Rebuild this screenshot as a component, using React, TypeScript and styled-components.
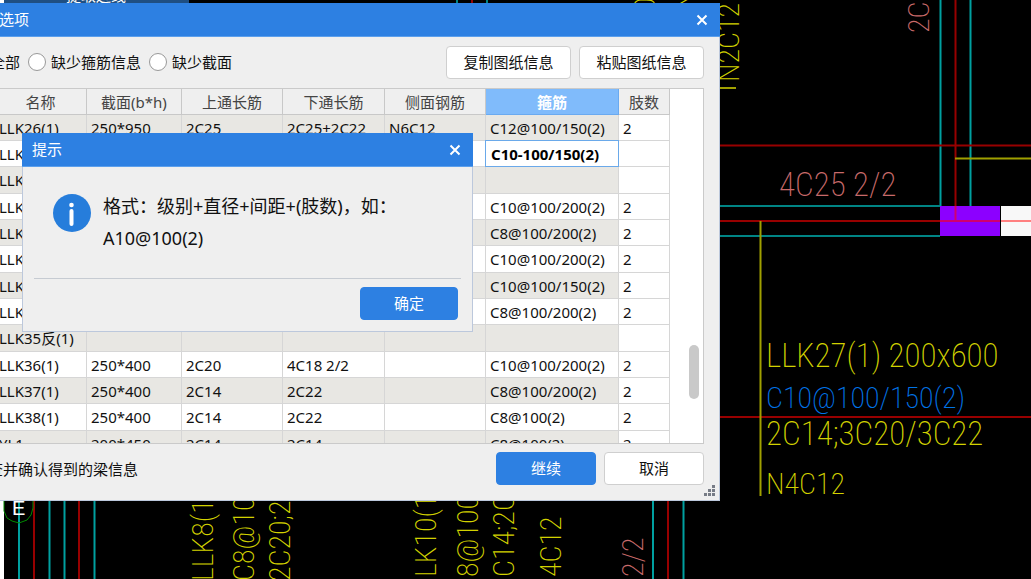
import React, { useState } from "react";
import styled, { createGlobalStyle } from "styled-components";

const GlobalStyle = createGlobalStyle`
  * { box-sizing: border-box; }
  body {
    margin: 0;
    background: #000;
    font-family: "Noto Sans", "Noto Sans CJK SC", sans-serif;
    font-size: 15px;
    line-height: 20px;
    color: #111;
  }
  button, input { font: inherit; color: inherit; }
`;

const Desktop = styled.main`
  position: relative;
  min-height: 100vh;
  overflow: hidden;
`;

/* CAD canvas */
const Canvas = styled.svg`
  position: absolute;
  inset: 0;
  width: 100%;
  height: 100%;
`;

const colors = {
  cyan: "#00a0a0",
  teal: "#008484",
  red: "#980000",
  olive: "#a0a000",
  yellow: "#d2d200",
  rose: "#c86a6a",
  blue: "#0074e8",
};

const CadLine = styled.line<{ $c: keyof typeof colors }>`
  stroke: ${(p) => colors[p.$c]};
  stroke-width: 2px;
`;

const CadText = styled.text<{ $c: keyof typeof colors; $large?: boolean }>`
  fill: ${(p) => colors[p.$c]};
  font-family: "Roboto Condensed", Roboto, sans-serif;
  font-weight: 200;
  font-size: ${(p) => (p.$large ? 33 : 30)}px;
`;

const Vertical = ({ x, y, c, children }: { x: number; y: number; c: keyof typeof colors; children: string }) => (
  <CadText $c={c} transform={`translate(${x} ${y}) rotate(-90)`}>{children}</CadText>
);

/* Windows */
const Frame = styled.section<{ $x: number; $y: number; $w: number }>`
  position: absolute;
  left: ${(p) => p.$x}px;
  top: ${(p) => p.$y}px;
  width: ${(p) => p.$w}px;
  background: #efefef;
  border: 1px solid #bcc8dc;
  border-top: 0;
`;

const TitleBar = styled.header<{ $pad: number }>`
  display: flex;
  align-items: center;
  justify-content: space-between;
  height: 34px;
  margin: 0 -1px;
  padding: 0 10px 0 ${(p) => p.$pad}px;
  background: #2d80e2;
  border-bottom: 1px solid #5b9fec;
  color: #fff;
`;

const Title = styled.h1`
  margin: 0;
  padding-bottom: 2px;
  font-size: 15px;
  font-weight: 400;
  line-height: 20px;
`;

const CloseButton = styled.button`
  display: flex;
  padding: 2px;
  border: 0;
  background: none;
  color: #fff;
`;

const Close = () => (
  <CloseButton aria-label="关闭">
    <svg width="12" height="12" viewBox="0 0 12 12">
      <path d="M1.5 1.5l9 9M10.5 1.5l-9 9" stroke="currentColor" strokeWidth="2" />
    </svg>
  </CloseButton>
);

const Toolbar = styled.div`
  display: flex;
  align-items: center;
  gap: 8px;
  padding: 9px 15px 9px 26px;
`;

const RadioLabel = styled.label`
  display: flex;
  align-items: center;
  gap: 5px;
  padding-bottom: 2px;
`;

const Radio = styled.input`
  appearance: none;
  width: 18px;
  height: 18px;
  margin: 0;
  border: 1px solid #999;
  border-radius: 50%;
  background: #fff;
`;

const Spacer = styled.div`
  flex: 1;
`;

const Button = styled.button<{ $primary?: boolean; $w: number }>`
  width: ${(p) => p.$w}px;
  height: 33px;
  padding: 0 0 2px;
  border: 1px solid ${(p) => (p.$primary ? "#2d80e2" : "#cfcfcf")};
  border-radius: 4px;
  background: ${(p) => (p.$primary ? "#2d80e2" : "#fff")};
  color: ${(p) => (p.$primary ? "#fff" : "#111")};
`;

const TableArea = styled.div`
  display: flex;
  height: 356px;
  margin: 0 15px;
  overflow: hidden;
  border: 1px solid #cacaca;
  background: #fff;
`;

const Grid = styled.table`
  flex: 1;
  align-self: flex-start;
  table-layout: fixed;
  border-collapse: separate;
  border-spacing: 0;
  width: 100%;
`;

const Head = styled.th<{ $active?: boolean }>`
  height: 26px;
  padding: 0;
  border-right: 1px solid ${(p) => (p.$active ? "#6aaaf0" : "#c8c8c8")};
  border-bottom: 1px solid ${(p) => (p.$active ? "#6aaaf0" : "#c8c8c8")};
  background: ${(p) => (p.$active ? "#80bbfb" : "#efefef")};
  color: ${(p) => (p.$active ? "#fff" : "#444")};
  font-weight: ${(p) => (p.$active ? 700 : 400)};
`;

const Row = styled.tr`
  height: 26px;
  &:nth-child(3n) { height: 27px; }
  &:nth-child(odd) td { background: #e8e7e3; }
  &:nth-child(odd) td:last-child { background: #fff; }
`;

const Cell = styled.td`
  padding: 0 0 0 4px;
  border-right: 1px solid #d6d6d6;
  border-bottom: 1px solid #d6d6d6;
  white-space: nowrap;
`;

const EditCell = styled(Cell)`
  padding: 0;
`;

const Editor = styled.input`
  display: block;
  width: 100%;
  height: 25px;
  padding: 0 0 0 5px;
  border: 0;
  outline: 1px solid #6aa9ea;
  background: #fff;
  color: #000;
  font-weight: 700;
`;

const Gutter = styled.div`
  display: flex;
  justify-content: flex-end;
  align-items: flex-start;
  width: 33px;
  padding: 256px 4px 0 0;
`;

const Thumb = styled.div`
  width: 10px;
  height: 54px;
  border-radius: 5px;
  background: #c9c9c9;
`;

const Footer = styled.footer`
  display: flex;
  align-items: center;
  gap: 8px;
  padding: 8px 15px 15px 17px;
`;

const Grip = styled.svg`
  position: absolute;
  right: 4px;
  bottom: 4px;
`;

const Message = styled.div`
  display: flex;
  gap: 12px;
  margin: 0 11px;
  padding: 23px 0 24px 19px;
  border-bottom: 1px solid #c6cbd2;
  font-size: 18px;
  line-height: 32px;
`;

const InfoIcon = styled.svg`
  flex: none;
  margin-top: 4px;
`;

const MessageText = styled.p`
  margin: 0;
`;

const Actions = styled.div`
  display: flex;
  justify-content: flex-end;
  padding: 8px 14px 11px;
`;

const headers = ["名称", "截面(b*h)", "上通长筋", "下通长筋", "侧面钢筋", "箍筋", "肢数"];
const widths = [92, 95, 101, 102, 101, 133, 51];

const rows: string[][] = [
  ["LLK26(1)", "250*950", "2C25", "2C25+2C22", "N6C12", "C12@100/150(2)", "2"],
  ["LLK27(1)", "", "", "", "", "C10-100/150(2)", ""],
  ["LLK28(1)", "", "", "", "", "", ""],
  ["LLK29(1)", "", "", "", "", "C10@100/200(2)", "2"],
  ["LLK30(1)", "", "", "", "", "C8@100/200(2)", "2"],
  ["LLK31(1)", "", "", "", "", "C10@100/200(2)", "2"],
  ["LLK32(1)", "", "", "", "", "C10@100/150(2)", "2"],
  ["LLK33(1)", "", "", "", "", "C8@100/200(2)", "2"],
  ["LLK35反(1)", "", "", "", "", "", ""],
  ["LLK36(1)", "250*400", "2C20", "4C18 2/2", "", "C10@100/200(2)", "2"],
  ["LLK37(1)", "250*400", "2C14", "2C22", "", "C8@100/200(2)", "2"],
  ["LLK38(1)", "250*400", "2C14", "2C22", "", "C8@100(2)", "2"],
  ["YL1", "200*450", "2C14", "2C14", "", "C8@100(2)", "2"],
];

const EDIT_ROW = 1;
const STIRRUP_COL = 5;

function Drawing() {
  return (
    <Canvas>
      {/* toolbar behind the windows */}
      <rect width="4" height="100%" fill="#fff" />
      <rect x="4" width="185" height="4" fill="#1f4f82" />
      <text x="66" y="1" fontSize="15" fill="#fff">提取边线</text>

      {[457, 487].map((x) => <CadLine key={x} $c="teal" x1={x} x2={x} y1="0" y2="10" />)}
      <CadLine $c="red" x1="472" x2="472" y1="0" y2="10" />
      <Vertical x={655} y={12} c="yellow">0C</Vertical>
      <Vertical x={692} y={12} c="yellow">N2</Vertical>

      {/* right-hand beams */}
      <rect x="940" y="206" width="60" height="30" fill="#8c00ff" />
      <rect x="1001" y="206" width="100%" height="30" fill="#f8f8f8" />
      <CadLine $c="cyan" x1="940.5" x2="940.5" y1="0" y2="206" />
      <CadLine $c="cyan" x1="970.5" x2="970.5" y1="0" y2="206" />
      <CadLine $c="teal" x1="700" x2="940" y1="206" y2="206" />
      <CadLine $c="teal" x1="700" x2="940" y1="236" y2="236" />
      <CadLine $c="red" x1="700" x2="100%" y1="145.5" y2="145.5" />
      <CadLine $c="red" x1="700" x2="940" y1="221" y2="221" />
      <line x1="940" x2="1000" y1="221" y2="221" stroke="#d00070" strokeWidth="2" />
      <line x1="1001" x2="100%" y1="221" y2="221" stroke="#ff8080" strokeWidth="2" />
      <CadLine $c="red" x1="955.5" x2="955.5" y1="0" y2="206" />
      <line x1="955.5" x2="955.5" y1="206" y2="221" stroke="#d00070" strokeWidth="2" />
      <CadLine $c="olive" x1="955" x2="100%" y1="158.5" y2="158.5" />
      <CadLine $c="red" x1="700" x2="100%" y1="417" y2="417" />
      <CadLine $c="olive" x1="760.5" x2="760.5" y1="221" y2="496" />
      <CadLine $c="olive" x1="718" x2="736" y1="88" y2="88" />

      <CadText $large $c="rose" x="779" y="196">4C25 2/2</CadText>
      <CadText $large $c="yellow" x="766" y="367">LLK27(1) 200x600</CadText>
      <CadText $c="blue" x="766" y="408">C10@100/150(2)</CadText>
      <CadText $large $c="yellow" x="766" y="445">2C14;3C20/3C22</CadText>
      <CadText $c="yellow" x="766" y="494">N4C12</CadText>
      <Vertical x={929} y={33} c="rose">2C</Vertical>
      <Vertical x={739} y={82} c="yellow">N2C12</Vertical>

      {/* lower beams */}
      {[19, 49.5, 64.5, 94.5, 653, 683.5].map((x) => (
        <CadLine key={x} $c="cyan" x1={x} x2={x} y1="495" y2="100%" />
      ))}
      {[34, 79, 668].map((x) => <CadLine key={x} $c="red" x1={x} x2={x} y1="495" y2="100%" />)}
      <path d="M4 500V511L7 518 12 521 19 523 27 520 31 515 33 508V500" fill="none" stroke="#008a00" />
      <text x="12" y="515" fontSize="20" fontFamily="Liberation Sans" fill="#fff">E</text>

      <Vertical x={213} y={581} c="yellow">LLK8(1)</Vertical>
      <Vertical x={254} y={581} c="yellow">C8@100/</Vertical>
      <Vertical x={290} y={581} c="yellow">2C20;2C</Vertical>
      <Vertical x={436} y={577} c="yellow">LK10(1)</Vertical>
      <Vertical x={478} y={577} c="yellow">8@100/</Vertical>
      <Vertical x={514} y={577} c="yellow">C14;2C</Vertical>
      <Vertical x={561} y={577} c="yellow">4C12</Vertical>
      <Vertical x={643} y={577} c="rose">2/2</Vertical>
    </Canvas>
  );
}

export default function App() {
  const [filter, setFilter] = useState("");
  const [stirrup, setStirrup] = useState(rows[EDIT_ROW][STIRRUP_COL]);

  return (
    <Desktop>
      <GlobalStyle />
      <Drawing />

      <Frame $x={-60} $y={3} $w={780}>
        <TitleBar $pad={59}>
          <Title>选项</Title>
          <Close />
        </TitleBar>
        <Toolbar>
          {["全部", "缺少箍筋信息", "缺少截面"].map((name) => (
            <RadioLabel key={name}>
              <Radio type="radio" name="filter" checked={filter === name} onChange={() => setFilter(name)} />
              {name}
            </RadioLabel>
          ))}
          <Spacer />
          <Button $w={125}>复制图纸信息</Button>
          <Button $w={125}>粘贴图纸信息</Button>
        </Toolbar>
        <TableArea>
          <Grid>
            <colgroup>
              <col />
              {widths.map((w, i) => <col key={i} width={w} />)}
            </colgroup>
            <thead>
              <tr>
                <Head />
                {headers.map((h, i) => <Head key={h} $active={i === STIRRUP_COL}>{h}</Head>)}
              </tr>
            </thead>
            <tbody>
              {rows.map((row, r) => (
                <Row key={r}>
                  <Cell />
                  {row.map((value, c) =>
                    r === EDIT_ROW && c === STIRRUP_COL ? (
                      <EditCell key={c}>
                        <Editor aria-label="箍筋" value={stirrup} onChange={(e) => setStirrup(e.target.value)} />
                      </EditCell>
                    ) : (
                      <Cell key={c}>{value}</Cell>
                    )
                  )}
                </Row>
              ))}
            </tbody>
          </Grid>
          <Gutter>
            <Thumb />
          </Gutter>
        </TableArea>
        <Footer>
          请检查并确认得到的梁信息
          <Spacer />
          <Button $primary $w={100}>继续</Button>
          <Button $w={100}>取消</Button>
        </Footer>
        <Grip width="11" height="11" fill="#777c86">
          {[[8, 0], [4, 4], [8, 4], [0, 8], [4, 8], [8, 8]].map(([x, y]) => (
            <rect key={`${x}-${y}`} x={x} y={y} width="3" height="3" />
          ))}
        </Grip>
      </Frame>

      <Frame $x={22} $y={133} $w={451} role="dialog" aria-label="提示">
        <TitleBar $pad={10}>
          <Title>提示</Title>
          <Close />
        </TitleBar>
        <Message>
          <InfoIcon width="38" height="38" viewBox="0 0 38 38">
            <circle cx="19" cy="19" r="19" fill="#267ddb" />
            <circle cx="18.5" cy="11" r="2.3" fill="#fff" />
            <rect x="16.5" y="15" width="4" height="17" rx="2" fill="#fff" />
          </InfoIcon>
          <MessageText>
            格式：级别+直径+间距+(肢数)，如：
            <br />
            A10@100(2)
          </MessageText>
        </Message>
        <Actions>
          <Button $primary $w={98}>确定</Button>
        </Actions>
      </Frame>
    </Desktop>
  );
}
